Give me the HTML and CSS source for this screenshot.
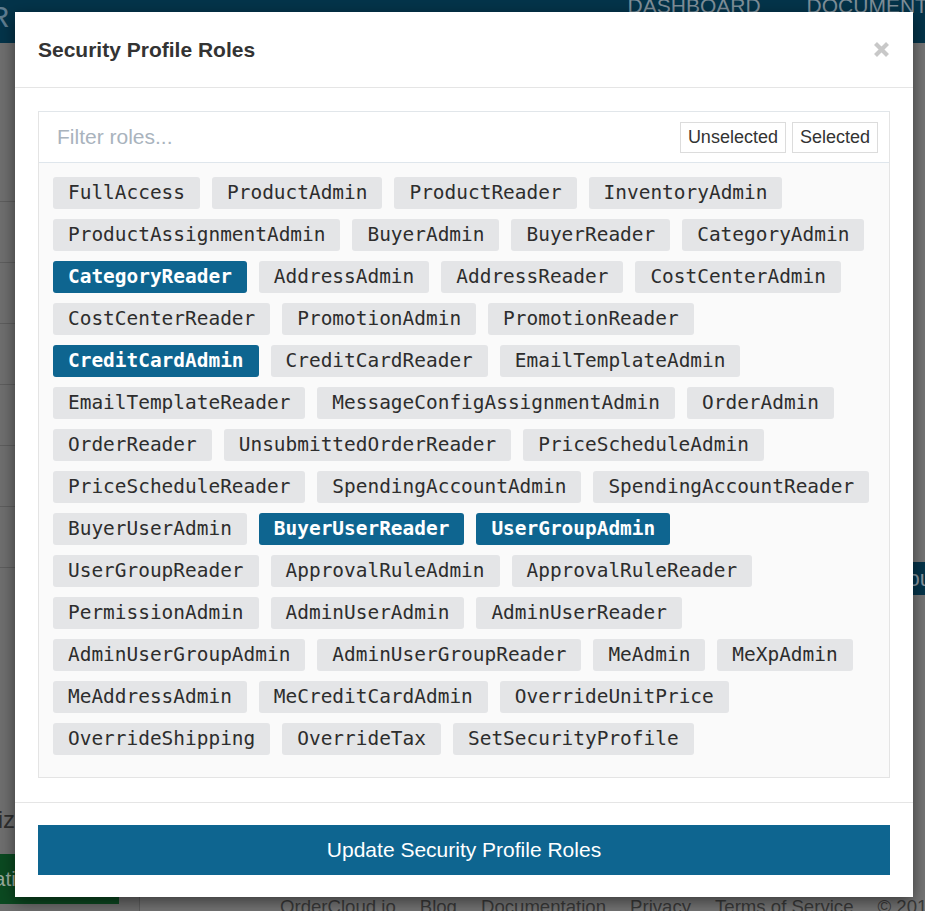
FILE: index.html
```html
<!DOCTYPE html>
<html lang="en">
<head>
<meta charset="utf-8">
<title>Security Profile Roles</title>
<link rel="stylesheet" href="styles.css">
</head>
<body>
<div class="page">
  <header class="nav">
    <span class="brand">R</span>
    <nav class="nav-links">
      <span class="nav-link">DASHBOARD</span>
      <span class="nav-link">DOCUMENTATION</span>
    </nav>
  </header>
  <div class="page-body">
    <aside class="sidebar">
      <div class="side-top"></div>
      <div class="side-row"></div>
      <div class="side-row"></div>
      <div class="side-row"></div>
      <div class="side-row"></div>
      <div class="side-row"></div>
      <div class="side-row"></div>
      <div class="side-fill"></div>
      <div class="side-heading">Customiz</div>
      <div class="side-btn">Integrati</div>
    </aside>
    <main class="main">
      <div class="main-fill"></div>
      <div class="main-tab">Group</div>
      <div class="main-fill2"></div>
      <footer class="page-footer">
        <span>OrderCloud.io</span>
        <span>Blog</span>
        <span>Documentation</span>
        <span>Privacy</span>
        <span>Terms of Service</span>
        <span>© 2017</span>
      </footer>
    </main>
  </div>
</div>

<div class="modal">
  <div class="modal-header">
    <h4 class="modal-title">Security Profile Roles</h4>
    <span class="close" aria-label="Close">
      <svg width="17" height="17" viewBox="0 0 17 17"><path d="M2.5 2.5 L14.5 14.5 M14.5 2.5 L2.5 14.5" stroke="#c8c8c8" stroke-width="4.2" stroke-linecap="butt" fill="none"/></svg>
    </span>
  </div>
  <div class="modal-body">
    <div class="panel">
      <div class="filter-row">
        <input class="filter-input" type="text" placeholder="Filter roles...">
        <div class="toggles">
          <span class="toggle">Unselected</span>
          <span class="toggle">Selected</span>
        </div>
      </div>
      <div class="tags">
        <span class="tag">FullAccess</span>
        <span class="tag">ProductAdmin</span>
        <span class="tag">ProductReader</span>
        <span class="tag">InventoryAdmin</span>
        <span class="tag">ProductAssignmentAdmin</span>
        <span class="tag">BuyerAdmin</span>
        <span class="tag">BuyerReader</span>
        <span class="tag">CategoryAdmin</span>
        <span class="tag selected">CategoryReader</span>
        <span class="tag">AddressAdmin</span>
        <span class="tag">AddressReader</span>
        <span class="tag">CostCenterAdmin</span>
        <span class="tag">CostCenterReader</span>
        <span class="tag">PromotionAdmin</span>
        <span class="tag">PromotionReader</span>
        <span class="tag selected">CreditCardAdmin</span>
        <span class="tag">CreditCardReader</span>
        <span class="tag">EmailTemplateAdmin</span>
        <span class="tag">EmailTemplateReader</span>
        <span class="tag">MessageConfigAssignmentAdmin</span>
        <span class="tag">OrderAdmin</span>
        <span class="tag">OrderReader</span>
        <span class="tag">UnsubmittedOrderReader</span>
        <span class="tag">PriceScheduleAdmin</span>
        <span class="tag">PriceScheduleReader</span>
        <span class="tag">SpendingAccountAdmin</span>
        <span class="tag">SpendingAccountReader</span>
        <span class="tag">BuyerUserAdmin</span>
        <span class="tag selected">BuyerUserReader</span>
        <span class="tag selected">UserGroupAdmin</span>
        <span class="tag">UserGroupReader</span>
        <span class="tag">ApprovalRuleAdmin</span>
        <span class="tag">ApprovalRuleReader</span>
        <span class="tag">PermissionAdmin</span>
        <span class="tag">AdminUserAdmin</span>
        <span class="tag">AdminUserReader</span>
        <span class="tag">AdminUserGroupAdmin</span>
        <span class="tag">AdminUserGroupReader</span>
        <span class="tag">MeAdmin</span>
        <span class="tag">MeXpAdmin</span>
        <span class="tag">MeAddressAdmin</span>
        <span class="tag">MeCreditCardAdmin</span>
        <span class="tag">OverrideUnitPrice</span>
        <span class="tag">OverrideShipping</span>
        <span class="tag">OverrideTax</span>
        <span class="tag">SetSecurityProfile</span>
      </div>
    </div>
  </div>
  <div class="modal-footer">
    <button class="submit" type="button">Update Security Profile Roles</button>
  </div>
</div>
</body>
</html>
```

FILE: styles.css
```css
* { box-sizing: border-box; }

html, body {
  margin: 0;
  padding: 0;
}

body {
  width: 925px;
  height: 911px;
  overflow: hidden;
  position: relative;
  background: #767676;
  font-family: "Liberation Sans", Arial, Helvetica, sans-serif;
  color: #333;
}

/* ---------- background page (dimmed by backdrop) ---------- */
.page {
  width: 925px;
  height: 911px;
  display: flex;
  flex-direction: column;
}

.nav {
  height: 43px;
  flex: none;
  background: #04344a;
  display: flex;
  justify-content: space-between;
  overflow: hidden;
}

.brand {
  font-size: 30px;
  line-height: 1;
  color: #5f7d90;
  margin-left: -12px;
  margin-top: 2px;
}

.nav-links {
  display: flex;
  gap: 46px;
  margin-right: -64px;
}

.nav-link {
  font-size: 21px;
  line-height: 1;
  color: #7f8f99;
  margin-top: -5px;
  white-space: nowrap;
}

.page-body {
  flex: 1;
  display: flex;
  min-height: 0;
}

.sidebar {
  width: 140px;
  flex: none;
  background: #6f6f6f;
  border-right: 1px solid #5f5f5f;
  display: flex;
  flex-direction: column;
  overflow: hidden;
}

.side-top {
  height: 159px;
  flex: none;
  border-bottom: 1px solid #5e5e5e;
}

.side-row {
  height: 61px;
  flex: none;
  border-bottom: 1px solid #5e5e5e;
}

.side-fill { flex: 1; }

.side-heading {
  font-size: 24px;
  color: #2e2e2e;
  margin-left: -85px;
  white-space: nowrap;
  height: 30px;
  line-height: 30px;
  margin-bottom: 19px;
}

.side-btn {
  height: 50px;
  width: 119px;
  flex: none;
  background: #0b4a21;
  color: #9aab9d;
  font-size: 21px;
  line-height: 50px;
  white-space: nowrap;
  overflow: hidden;
  text-indent: -60px;
  margin-bottom: 7px;
}

.main {
  flex: 1;
  display: flex;
  flex-direction: column;
  background: #767676;
}

.main-fill { height: 519px; flex: none; }

.main-tab {
  height: 33px;
  flex: none;
  background: #04344a;
  color: #8a98a2;
  font-size: 22px;
  line-height: 33px;
  padding-left: 743px;
  white-space: nowrap;
  overflow: hidden;
}

.main-fill2 { flex: 1; }

.page-footer {
  height: 20px;
  flex: none;
  display: flex;
  gap: 24px;
  padding-left: 140px;
  font-size: 18.6px;
  line-height: 20px;
  color: #3a3a3a;
  white-space: nowrap;
  margin-bottom: -6px;
}

/* ---------- modal ---------- */
.modal {
  position: absolute;
  left: 15px;
  top: 12px;
  width: 898px;
  background: #fff;
  box-shadow: 0 5px 15px rgba(0, 0, 0, 0.5);
}

.modal-header {
  height: 76px;
  padding: 0 23px;
  display: flex;
  align-items: center;
  justify-content: space-between;
  border-bottom: 1px solid #e5e5e5;
}

.modal-title {
  margin: 0;
  font-size: 21px;
  font-weight: bold;
  color: #333;
}

.close {
  display: flex;
  width: 17px;
  height: 17px;
}

.modal-body {
  padding: 23px 23px 24px;
}

.panel {
  border: 1px solid #e4e4e4;
  border-top-color: #e1e6ea;
}

.filter-row {
  height: 51px;
  display: flex;
  align-items: center;
  justify-content: space-between;
  background: #fff;
  border-bottom: 1px solid #dfe6ec;
  padding: 0 11px 1px 18px;
}

.filter-input {
  border: none;
  outline: none;
  background: transparent;
  font-family: "Liberation Sans", Arial, Helvetica, sans-serif;
  font-size: 21px;
  color: #333;
  padding: 0;
  width: 400px;
}

.filter-input::placeholder {
  color: #a9b3bd;
}

.toggles {
  display: flex;
  gap: 6px;
  margin-top: 2px;
}

.toggle {
  height: 31px;
  line-height: 29px;
  padding: 0 7px;
  border: 1px solid #dcdcdc;
  background: #fff;
  font-size: 18px;
  color: #333;
}

.tags {
  display: flex;
  flex-wrap: wrap;
  column-gap: 12px;
  row-gap: 10px;
  padding: 14px 14px 22px 14px;
  background: #fafafa;
}

.tag {
  height: 32px;
  line-height: 32px;
  padding: 0 15px;
  border-radius: 3px;
  background: #e4e5e7;
  color: #2d2d2d;
  font-family: "DejaVu Sans Mono", "Liberation Mono", monospace;
  font-size: 19.45px;
  white-space: nowrap;
}

.tag.selected {
  background: #0e6590;
  color: #fff;
  font-weight: bold;
}

.modal-footer {
  border-top: 1px solid #e5e5e5;
  padding: 22px 23px 22px;
}

.submit {
  display: block;
  width: 100%;
  height: 50px;
  border: none;
  background: #0e6590;
  color: #fff;
  font-family: "Liberation Sans", Arial, Helvetica, sans-serif;
  font-size: 21px;
  padding: 0;
  cursor: pointer;
}
```
